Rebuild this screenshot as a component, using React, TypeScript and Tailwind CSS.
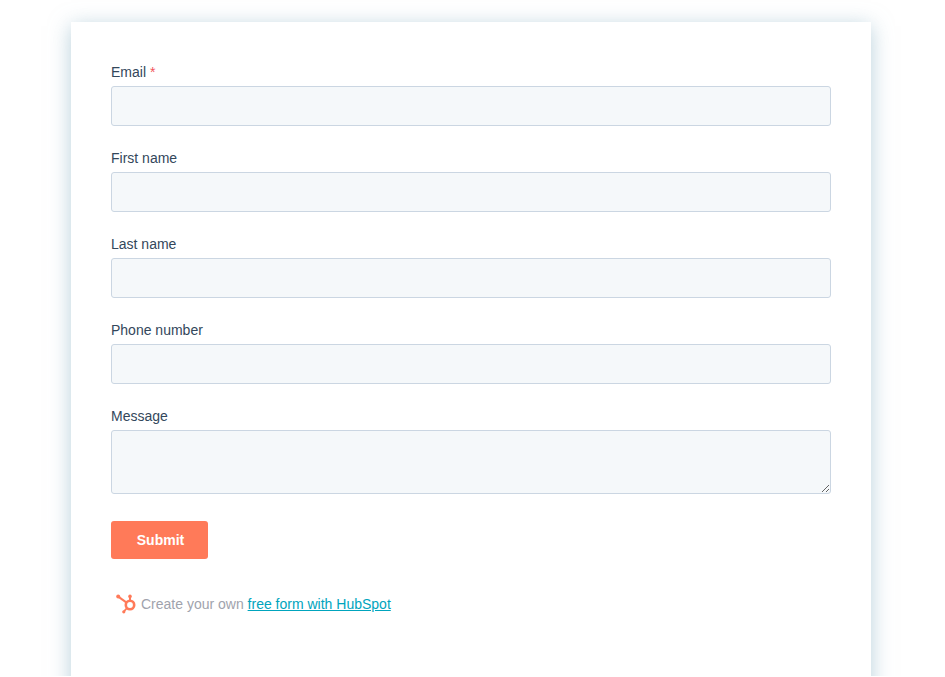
import React from 'react';

const fields = [
  { label: 'Email', required: true },
  { label: 'First name' },
  { label: 'Last name' },
  { label: 'Phone number' },
];

function Sprocket() {
  return (
    <svg width="22" height="22" viewBox="0 0 22 22" fill="none" className="shrink-0">
      <circle cx="15" cy="12" r="4.2" stroke="#ff7a59" strokeWidth="2.6" />
      <path d="M15 8V4" stroke="#ff7a59" strokeWidth="2" />
      <circle cx="15" cy="3.4" r="1.8" fill="#ff7a59" />
      <path d="M11.6 9.6L3.6 3.9" stroke="#ff7a59" strokeWidth="2" />
      <circle cx="3.2" cy="3.4" r="2" fill="#ff7a59" />
      <path d="M12 15L9 18.4" stroke="#ff7a59" strokeWidth="1.8" />
      <circle cx="8.8" cy="18.8" r="1.6" fill="#ff7a59" />
    </svg>
  );
}

export default function App() {
  return (
    <div className="h-[676px] overflow-hidden bg-white pt-[22px] font-['Liberation_Sans',Arial,sans-serif] text-[14px] leading-[20px] text-[#33475b]">
      <div className="ml-[71px] h-[700px] w-[800px] bg-white px-10 pt-10 shadow-[0_4px_20px_rgba(125,170,190,0.55)]">
        <form>
          {fields.map((field) => (
            <div key={field.label} className="mb-[22px]">
              <label className="mb-1 block">
                {field.label}
                {field.required && <span className="text-[#f2545b]"> *</span>}
              </label>
              <input
                type="text"
                className="block h-10 w-full rounded-[3px] border border-[#cbd6e2] bg-[#f5f8fa] px-[15px] outline-none"
              />
            </div>
          ))}

          {/* Message */}
          <div className="mb-[27px]">
            <label className="mb-1 block">Message</label>
            <textarea className="block h-16 w-full rounded-[3px] border border-[#cbd6e2] bg-[#f5f8fa] px-[15px] py-2 outline-none" />
          </div>

          <button
            type="button"
            className="block h-[38px] w-[97px] rounded-[3px] bg-[#ff7a59] pl-[2px] text-center text-[14px] font-bold text-white"
          >
            Submit
          </button>
        </form>

        <div className="mt-[34px] flex items-center pl-1">
          <Sprocket />
          <p className="ml-[4px] text-[#9fa3ad]">
            Create your own{' '}
            <a href="#" className="text-[#00a4bd] underline">
              free form with HubSpot
            </a>
          </p>
        </div>
      </div>
    </div>
  );
}
